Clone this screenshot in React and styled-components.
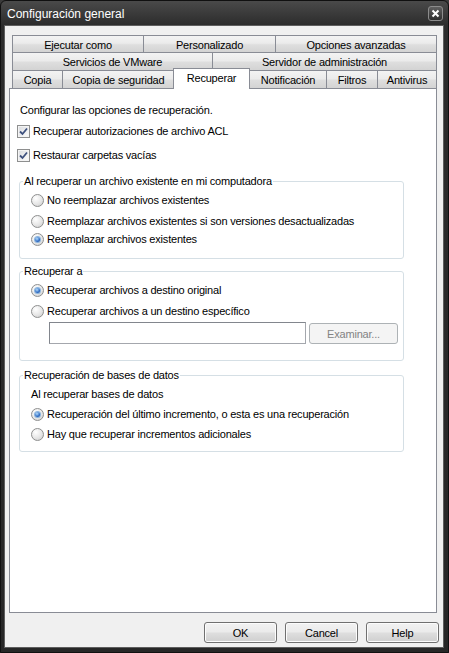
import React from 'react';
import styled, { createGlobalStyle } from 'styled-components';

const GlobalStyle = createGlobalStyle`
  html, body {
    margin: 0;
    padding: 0;
    background: #3a3a3a;
  }
  body {
    font-family: "Liberation Sans", Arial, sans-serif;
    font-size: 11px;
    letter-spacing: -0.2px;
    color: #000;
  }
`;

const Window = styled.div`
  box-sizing: border-box;
  width: 449px;
  height: 653px;
  display: flex;
  flex-direction: column;
  padding: 0 4px 4px 3px;
  background: linear-gradient(#4a4a4a, #2c2c2c 24px, #272727);
  border: 1px solid #101010;
  border-radius: 6px 6px 0 0;
`;

const TitleBar = styled.div`
  height: 24px;
  display: flex;
  align-items: center;
  justify-content: space-between;
  padding: 0 1px 0 3px;
`;

const Title = styled.span`
  color: #fff;
  font-size: 12px;
  letter-spacing: 0;
  padding-top: 1px;
`;

const CloseButton = styled.span`
  box-sizing: border-box;
  width: 15px;
  height: 15px;
  display: flex;
  align-items: center;
  justify-content: center;
  border: 1px solid #8c8c8c;
  border-radius: 3px;
  background: linear-gradient(#606060, #2e2e2e);
`;

const Client = styled.div`
  flex: 1;
  display: flex;
  flex-direction: column;
  background: #f0f0f0;
  border: 1px solid #5e5e5e;
  padding: 9px 6px 4px 4px;
`;

const TabStrip = styled.div`
  display: flex;
  flex-direction: column;
  margin-left: 3px;
`;

const TabRow = styled.div`
  display: flex;
  align-items: flex-start;
  height: ${p => p.$h}px;
`;

const Tab = styled.div`
  box-sizing: border-box;
  width: ${p => p.$w}px;
  height: ${p => p.$h}px;
  display: flex;
  align-items: center;
  justify-content: center;
  padding-top: 1px;
  border-top: 1px solid #898c95;
  border-left: 1px solid #898c95;
  border-right: ${p => (p.$last ? '1px solid #898c95' : 'none')};
  background: linear-gradient(#f3f3f3, #ebebeb 45%, #dedede 55%, #d3d3d3);
  white-space: nowrap;
`;

const ActiveTab = styled(Tab)`
  position: relative;
  z-index: 2;
  height: ${p => p.$h + 3}px;
  margin: -2px -1px -1px -1px;
  padding-top: 0;
  padding-bottom: 3px;
  border-right: 1px solid #898c95;
  background: #fff;
`;

const Panel = styled.div`
  flex: 1;
  display: flex;
  flex-direction: column;
  background: #fff;
  border: 1px solid #898c95;
  padding-left: 7px;
`;

const Line = styled.div`
  display: flex;
  align-items: center;
  height: 14px;
  margin-top: ${p => p.$mt || 0}px;
  margin-left: ${p => p.$ml || 0}px;
  white-space: nowrap;
`;

const CheckBox = styled.span`
  box-sizing: border-box;
  width: 13px;
  height: 13px;
  margin-right: 3px;
  display: flex;
  align-items: center;
  justify-content: center;
  border: 1px solid #8e8f8f;
  background: linear-gradient(135deg, #d9dbdf, #f7f7f7 80%);
  box-shadow: inset 0 0 0 1px #f4f4f4;
`;

const Radio = styled.span`
  box-sizing: border-box;
  width: 13px;
  height: 13px;
  margin-right: 3px;
  display: flex;
  align-items: center;
  justify-content: center;
  border: 1px solid #8e8f8f;
  border-radius: 50%;
  background: radial-gradient(circle at 35% 30%, #ffffff, #e6e6e6 55%, #c9c9c9);

  &::after {
    content: '';
    display: ${p => (p.$on ? 'block' : 'none')};
    width: 5px;
    height: 5px;
    border-radius: 50%;
    background: radial-gradient(circle at 40% 35%, #b4dcfb, #2d6cc5 60%, #163d85);
    box-shadow: 0 0 0 1px #8ab4de;
  }
`;

const Group = styled.div`
  position: relative;
  box-sizing: border-box;
  width: 385px;
  margin-top: ${p => p.$mt}px;
  margin-left: 2px;
  padding: 11px 0 ${p => p.$pb}px 11px;
  border: 1px solid #d5dfe5;
  border-radius: 3px;
  display: flex;
  flex-direction: column;
`;

const Legend = styled.span`
  position: absolute;
  top: -8px;
  left: 3px;
  height: 14px;
  line-height: 14px;
  padding: 0 1px;
  background: #fff;
  white-space: nowrap;
`;

const PathRow = styled.div`
  display: flex;
  align-items: flex-start;
  margin-top: 4px;
  margin-left: 18px;
`;

const PathInput = styled.div`
  box-sizing: border-box;
  width: 257px;
  height: 22px;
  border: 1px solid #82868d;
  border-right-color: #a4a7ad;
  border-bottom-color: #a4a7ad;
  background: #fff;
`;

const Button = styled.div`
  box-sizing: border-box;
  width: ${p => p.$w}px;
  height: 21px;
  display: flex;
  align-items: center;
  justify-content: center;
  border: 1px solid ${p => (p.$disabled ? '#adb2b5' : '#707070')};
  border-radius: 3px;
  color: ${p => (p.$disabled ? '#838383' : '#000')};
  background: ${p =>
    p.$disabled
      ? '#f4f4f4'
      : 'linear-gradient(#f2f2f2, #ebebeb 45%, #dddddd 55%, #cfcfcf)'};
  box-shadow: inset 0 0 0 1px ${p => (p.$disabled ? '#f4f4f4' : '#fcfcfc')};
  white-space: nowrap;
`;

const BrowseButton = styled(Button)`
  margin: 1px 0 0 3px;
`;

const ButtonBar = styled.div`
  display: flex;
  justify-content: flex-end;
  gap: 8px;
  margin: 9px -2px 0 0;
`;

const Check = () => (
  <svg width="9" height="9" viewBox="0 0 9 9">
    <path d="M1 4.5 L3.5 7 L8 1.5" fill="none" stroke="#3e517e" strokeWidth="1.8" />
  </svg>
);

const tabRows = [
  { h: 17, tabs: [['Ejecutar como', 131], ['Personalizado', 132], ['Opciones avanzadas', 162]] },
  { h: 18, tabs: [['Servicios de VMware', 200], ['Servidor de administración', 225]] },
  {
    h: 18,
    tabs: [
      ['Copia', 50],
      ['Copia de seguridad', 112],
      ['Recuperar', 77, true],
      ['Notificación', 77],
      ['Filtros', 51],
      ['Antivirus', 60],
    ],
  },
];

function App() {
  return (
    <>
      <GlobalStyle />
      <Window>
        <TitleBar>
          <Title>Configuración general</Title>
          <CloseButton>
            <svg width="9" height="9" viewBox="0 0 9 9">
              <path d="M1.5 1.5 L7.5 7.5 M7.5 1.5 L1.5 7.5" stroke="#fff" strokeWidth="2" />
            </svg>
          </CloseButton>
        </TitleBar>

        <Client>
          <TabStrip>
            {tabRows.map((row, i) => (
              <TabRow key={i} $h={row.h}>
                {row.tabs.map(([label, w, active], j) =>
                  active ? (
                    <ActiveTab key={label} $w={w} $h={row.h}>{label}</ActiveTab>
                  ) : (
                    <Tab key={label} $w={w} $h={row.h} $last={j === row.tabs.length - 1}>
                      {label}
                    </Tab>
                  )
                )}
              </TabRow>
            ))}
          </TabStrip>

          <Panel>
            <Line $mt={14} $ml={3}>Configurar las opciones de recuperación.</Line>
            <Line $mt={7}>
              <CheckBox><Check /></CheckBox>
              Recuperar autorizaciones de archivo ACL
            </Line>
            <Line $mt={10}>
              <CheckBox><Check /></CheckBox>
              Restaurar carpetas vacías
            </Line>

            <Group $mt={19} $pb={12}>
              <Legend>Al recuperar un archivo existente en mi computadora</Legend>
              <Line><Radio />No reemplazar archivos existentes</Line>
              <Line $mt={7}><Radio />Reemplazar archivos existentes si son versiones desactualizadas</Line>
              <Line $mt={4}><Radio $on />Reemplazar archivos existentes</Line>
            </Group>

            <Group $mt={12} $pb={16}>
              <Legend>Recuperar a</Legend>
              <Line><Radio $on />Recuperar archivos a destino original</Line>
              <Line $mt={7}><Radio />Recuperar archivos a un destino específico</Line>
              <PathRow>
                <PathInput />
                <BrowseButton $w={89} $disabled>Examinar...</BrowseButton>
              </PathRow>
            </Group>

            <Group $mt={14} $pb={10}>
              <Legend>Recuperación de bases de datos</Legend>
              <Line>Al recuperar bases de datos</Line>
              <Line $mt={6}><Radio $on />Recuperación del último incremento, o esta es una recuperación</Line>
              <Line $mt={6}><Radio />Hay que recuperar incrementos adicionales</Line>
            </Group>
          </Panel>

          <ButtonBar>
            <Button $w={73}>OK</Button>
            <Button $w={73}>Cancel</Button>
            <Button $w={73}>Help</Button>
          </ButtonBar>
        </Client>
      </Window>
    </>
  );
}

export default App;
